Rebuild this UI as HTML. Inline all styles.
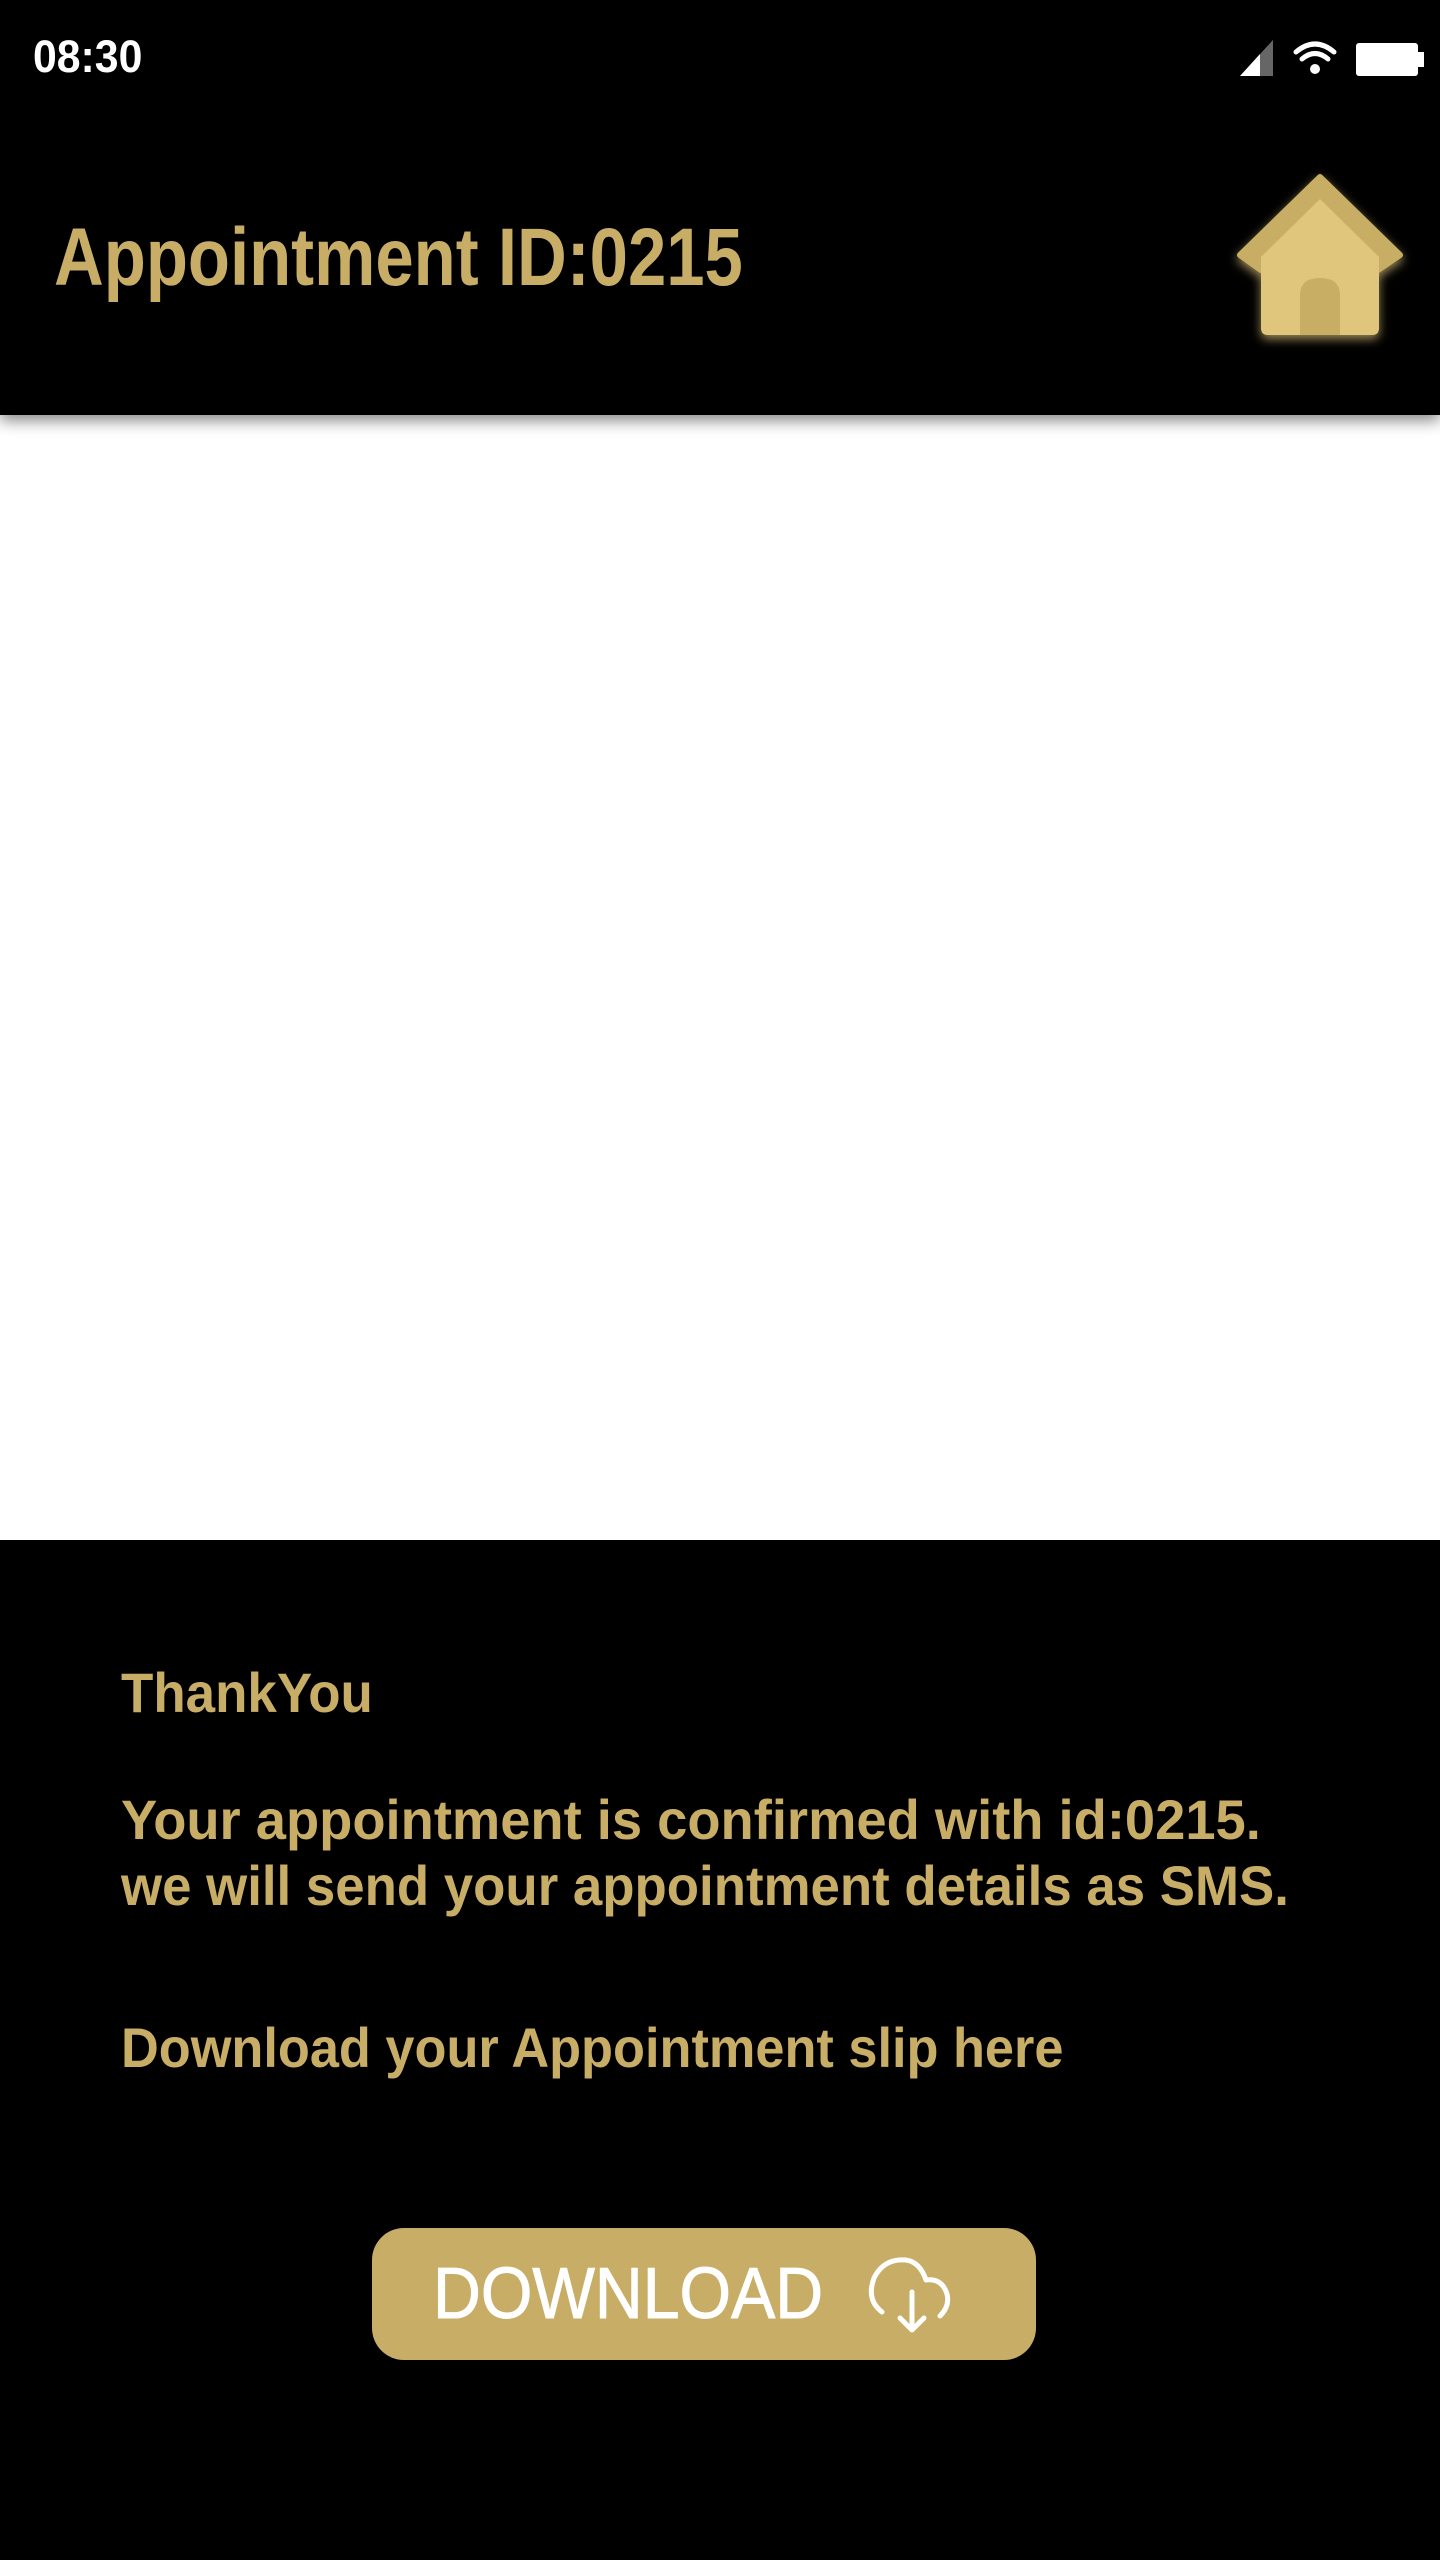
<!DOCTYPE html>
<html><head><meta charset="utf-8"><style>
html,body{margin:0;padding:0;width:1440px;height:2560px;background:#000;overflow:hidden;font-family:"Liberation Sans",Arial,sans-serif}
.abs{position:absolute;white-space:nowrap}
.g{color:#C8AD66;font-weight:bold;transform-origin:left}
</style></head><body>
<div class="abs" style="left:0;top:0;width:1440px;height:415px;background:#000;box-shadow:0 6px 14px rgba(0,0,0,0.45);z-index:2"></div>
<div class="abs" style="left:0;top:415px;width:1440px;height:1125px;background:#fff"></div>
<div class="abs" style="left:33px;top:29px;font-size:45px;font-weight:bold;color:#fff;line-height:56px;z-index:3;transform:scaleX(0.95);transform-origin:left">08:30</div>
<svg class="abs" style="left:1236px;top:36px;z-index:3" width="200" height="44" viewBox="0 0 200 44">
<polygon points="4,40 37,4 37,40" fill="#666"/>
<polygon points="4,40 24,18 24,40" fill="#fff"/>
<g fill="none" stroke="#fff" stroke-width="5" stroke-linecap="round">
<path d="M60,16 Q79,0 98,16"/><path d="M66,23 Q79,12 92,23"/>
</g>
<circle cx="79" cy="33" r="5" fill="#fff"/>
<rect x="120" y="7" width="62" height="33" rx="3" fill="#fff"/>
<rect x="182" y="16" width="6" height="15" fill="#fff"/>
</svg>
<div class="abs g" style="left:54px;top:210px;font-size:82px;line-height:96px;z-index:3;transform:scaleX(0.84)">Appointment ID:0215</div>
<svg class="abs" style="left:1230px;top:165px;z-index:3;filter:drop-shadow(0 4px 5px rgba(224,197,125,0.7))" width="180" height="175" viewBox="0 0 180 175">
<path d="M90,12 L170,90 L148,105 L31,105 L10,90 Z" fill="#C8AE65" stroke="#C8AE65" stroke-width="6" stroke-linejoin="round"/>
<path d="M90,34 L149,92 L149,163 Q149,170 142,170 L38,170 Q31,170 31,163 L31,92 Z" fill="#E0C57D"/>
<path d="M70,170 L70,130 Q70,113 90,113 Q110,113 110,130 L110,170 Z" fill="#C8AE65"/>
</svg>
<div class="abs g" style="left:121px;top:1660px;font-size:56px;line-height:66px;transform:scaleX(0.945)">ThankYou</div>
<div class="abs g" style="left:121px;top:1787px;font-size:56px;line-height:66px;transform:scaleX(0.97)">Your appointment is confirmed with id:0215.</div>
<div class="abs g" style="left:121px;top:1853px;font-size:56px;line-height:66px;transform:scaleX(0.943)">we will send your appointment details as SMS.</div>
<div class="abs g" style="left:121px;top:2015px;font-size:56px;line-height:66px;transform:scaleX(0.934)">Download your Appointment slip here</div>
<div class="abs" style="left:372px;top:2228px;width:664px;height:132px;border-radius:32px;background:#C8AD66"></div>
<div class="abs" style="left:433px;top:2254px;font-size:72px;line-height:80px;color:#fff;transform:scaleX(0.92);transform-origin:left;-webkit-text-stroke:1px #fff">DOWNLOAD</div>
<svg class="abs" style="left:862px;top:2250px" width="96" height="90" viewBox="0 0 96 90">
<g fill="none" stroke="#fff" stroke-width="5" stroke-linecap="round" stroke-linejoin="round">
<path d="M20,62 Q4,50 12,28 Q22,8 44,10 Q58,12 64,30 Q80,28 85,44 Q88,56 78,66"/>
<path d="M50,42 L50,80 M38,68 L50,80 L62,68"/>
</g>
</svg>
</body></html>
